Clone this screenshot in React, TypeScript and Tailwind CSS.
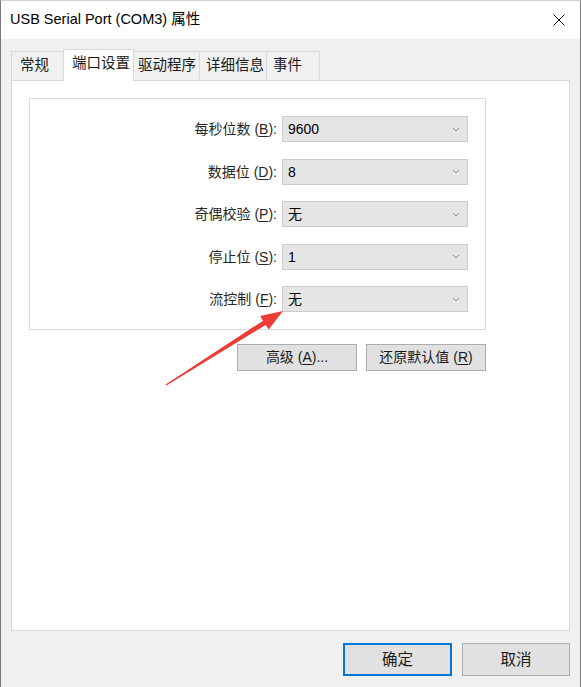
import React from "react";

const UI = { fontFamily: '"Liberation Sans", "Noto Sans CJK SC", sans-serif' };
const TITLE = { fontFamily: '"Liberation Sans", "Noto Sans CJK SC", sans-serif' };

function Chevron() {
  return (
    <svg width="8" height="5" viewBox="0 0 8 5" className="shrink-0">
      <polyline points="1,1 4,4 7,1" fill="none" stroke="#8a8a8a" strokeWidth="1" />
    </svg>
  );
}

function Row({ label, k, value }: { label: string; k: string; value: string }) {
  return (
    <div className="flex items-center justify-end h-[26px]">
      <span className="text-[14px] text-[#262626] leading-none whitespace-pre">
        {label} (<u className="underline-offset-2">{k}</u>):
      </span>
      <div className="ml-[5px] w-[186px] h-[26px] bg-[#e5e5e5] border border-[#cccccc] flex items-center justify-between pl-[5px] pr-[7px]">
        <span className="text-[14px] text-black leading-none">{value}</span>
        <Chevron />
      </div>
    </div>
  );
}

export default function App() {
  return (
    <div
      className="relative w-[581px] h-[687px] bg-[#f0f0f0] border-l border-r border-t border-l-[#7a7a7a] border-r-[#7a7a7a] border-t-[#d0d0d0] flex flex-col overflow-hidden"
      style={UI}
    >
      {/* Title bar */}
      <div className="h-[38px] bg-white flex items-center justify-between pl-[9px] pr-[15px] shrink-0">
        <span className="text-[14.5px] text-black" style={TITLE}>
          USB Serial Port (COM3) 属性
        </span>
        <svg width="12" height="12" viewBox="0 0 12 12">
          <line x1="0.5" y1="0.5" x2="11.5" y2="11.5" stroke="#111" strokeWidth="1" />
          <line x1="11.5" y1="0.5" x2="0.5" y2="11.5" stroke="#111" strokeWidth="1" />
        </svg>
      </div>

      <div className="flex flex-col px-[10px]">
        {/* Tabs */}
        <div className="mt-[10px] h-[31px] flex items-end">
          <div className="w-[52px] h-[29px] border-l border-t border-[#d9d9d9] bg-[#f0f0f0] pl-[8px] flex items-center text-[14.5px] text-[#1a1a1a]">
            常规
          </div>
          <div className="relative z-10 w-[71px] h-[32px] -mb-px border-l border-t border-r border-[#d9d9d9] bg-white pl-[8px] pb-[3px] flex items-center text-[14.5px] text-[#1a1a1a]">
            端口设置
          </div>
          <div className="w-[66px] h-[29px] border-t border-r border-[#d9d9d9] bg-[#f0f0f0] pl-[4px] flex items-center text-[14.5px] text-[#1a1a1a]">
            驱动程序
          </div>
          <div className="w-[67px] h-[29px] border-t border-r border-[#d9d9d9] bg-[#f0f0f0] pl-[6px] flex items-center text-[14.5px] text-[#1a1a1a]">
            详细信息
          </div>
          <div className="w-[53px] h-[29px] border-t border-r border-[#d9d9d9] bg-[#f0f0f0] pl-[6px] flex items-center text-[14.5px] text-[#1a1a1a]">
            事件
          </div>
        </div>

        {/* Panel */}
        <div className="h-[551px] bg-white border border-[#d9d9d9] p-[17px]">
          <div className="w-[457px] h-[232px] border border-[#dcdcdc] pt-[17px] pr-[17px] flex flex-col gap-[16.5px]">
            <Row label="每秒位数" k="B" value="9600" />
            <Row label="数据位" k="D" value="8" />
            <Row label="奇偶校验" k="P" value="无" />
            <Row label="停止位" k="S" value="1" />
            <Row label="流控制" k="F" value="无" />
          </div>
          <div className="w-[457px] mt-[14px] flex justify-end gap-[9px]">
            <div className="w-[120px] h-[27px] bg-[#e1e1e1] border border-[#adadad] flex items-center justify-center text-[14px] text-[#1a1a1a] whitespace-pre">
              高级 (<u className="underline-offset-2">A</u>)...
            </div>
            <div className="w-[120px] h-[27px] bg-[#e1e1e1] border border-[#adadad] flex items-center justify-center text-[14px] text-[#1a1a1a] whitespace-pre">
              还原默认值 (<u className="underline-offset-2">R</u>)
            </div>
          </div>
        </div>

        {/* Bottom buttons */}
        <div className="mt-[12px] flex justify-end gap-[10px]">
          <div className="w-[109px] h-[33px] bg-[#e1e1e1] border-2 border-[#0078d7] flex items-center justify-center text-[15.5px] text-[#1a1a1a]">
            确定
          </div>
          <div className="w-[108px] h-[33px] bg-[#e1e1e1] border border-[#adadad] flex items-center justify-center text-[15.5px] text-[#1a1a1a]">
            取消
          </div>
        </div>
      </div>

      {/* Red annotation arrow */}
      <svg
        className="absolute left-0 top-0 pointer-events-none"
        width="581"
        height="687"
        viewBox="0 0 581 687"
      >
        <polygon
          points="165.4,384.6 264.7,323.9 267.7,328.6 282,310 259.1,315.0 262.1,319.7 164.6,383.4"
          fill="#ee3b36"
        />
      </svg>
    </div>
  );
}
